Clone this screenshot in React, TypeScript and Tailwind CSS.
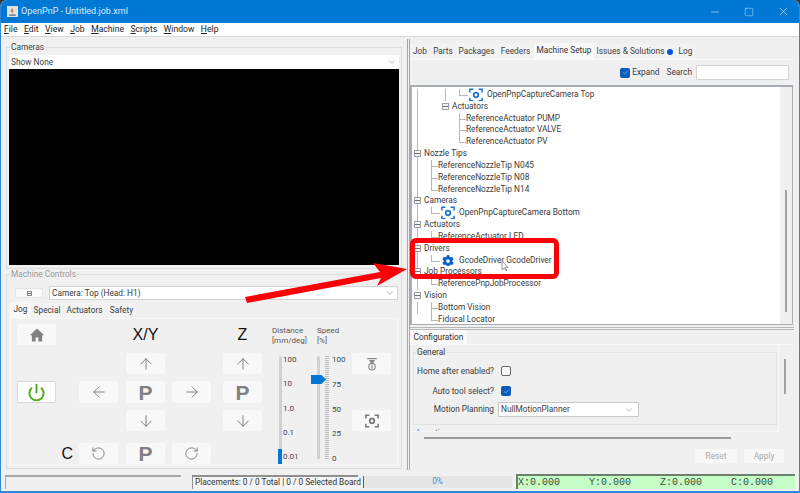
import React from "react";
import { ArrowUp, ArrowDown, ArrowLeft, ArrowRight, RotateCcw, RotateCw, Power, ChevronDown, Minus, Square, X, Check } from "lucide-react";
import { FaCog } from "react-icons/fa";

const FONT = "font-['Roboto','Noto_Sans',sans-serif]";

function Cam({ className = "", size = 14 }: { className?: string; size?: number }) {
  return (
    <svg viewBox="0 0 16 16" width={size} height={size} className={className} fill="none" stroke="currentColor" strokeWidth="1.7">
      <path d="M1 5V1.5H5M11 1.5H15V5M15 11V14.5H11M5 14.5H1V11" />
      <circle cx="8" cy="8" r="2.6" strokeWidth="2" />
    </svg>
  );
}

function Nozzle() {
  return (
    <svg viewBox="0 0 16 16" width={14} height={14} className="text-[#8a8a8a]">
      <path d="M2.5 1h11v1.6h-11zM4.5 3.4h7L9.4 7H6.6z" fill="currentColor" />
      <circle cx="8" cy="11" r="3.7" fill="none" stroke="currentColor" strokeWidth="1.3" />
      <path d="M8 8.5v5" stroke="currentColor" strokeWidth="1.3" />
    </svg>
  );
}

function HomeIcon() {
  return (
    <svg viewBox="0 0 16 16" width={16} height={16} className="text-[#808080]" fill="currentColor">
      <path d="M8 1.5 0.8 8.2h2.1V14.5h3.7v-4h2.8v4h3.7V8.2h2.1z" />
    </svg>
  );
}

function Btn({ children, className = "" }: { children?: React.ReactNode; className?: string }) {
  return <div className={`flex h-full w-full items-center justify-center rounded-[2px] bg-[#f8f8f8] ${className}`}>{children}</div>;
}

function PLabel() {
  return <span className="font-['Liberation_Sans',sans-serif] text-[21px] leading-none font-bold text-[#808080]">P</span>;
}

type Row = {
  text: string;
  x: number;
  guides: number[];
  box?: number;
  elbow?: number;
  icon?: "cam" | "gear";
  last?: boolean;
};

const TREE_LEFT = 412;
const rows: Row[] = [
  { text: "OpenPnpCaptureCamera Top", x: 487, guides: [417, 445], elbow: 459, icon: "cam", last: true },
  { text: "Actuators", x: 452, guides: [417], box: 445 },
  { text: "ReferenceActuator PUMP", x: 466, guides: [417], elbow: 459 },
  { text: "ReferenceActuator VALVE", x: 466, guides: [417], elbow: 459 },
  { text: "ReferenceActuator PV", x: 466, guides: [417], elbow: 459, last: true },
  { text: "Nozzle Tips", x: 424, guides: [], box: 417 },
  { text: "ReferenceNozzleTip N045", x: 438, guides: [417], elbow: 431 },
  { text: "ReferenceNozzleTip N08", x: 438, guides: [417], elbow: 431 },
  { text: "ReferenceNozzleTip N14", x: 438, guides: [417], elbow: 431, last: true },
  { text: "Cameras", x: 424, guides: [], box: 417 },
  { text: "OpenPnpCaptureCamera Bottom", x: 459, guides: [417], elbow: 431, icon: "cam", last: true },
  { text: "Actuators", x: 424, guides: [], box: 417 },
  { text: "ReferenceActuator LED", x: 438, guides: [417], elbow: 431, last: true },
  { text: "Drivers", x: 424, guides: [], box: 417 },
  { text: "GcodeDriver GcodeDriver", x: 459, guides: [417], elbow: 431, icon: "gear", last: true },
  { text: "Job Processors", x: 424, guides: [], box: 417 },
  { text: "ReferencePnpJobProcessor", x: 438, guides: [417], elbow: 431, last: true },
  { text: "Vision", x: 424, guides: [], box: 417 },
  { text: "Bottom Vision", x: 438, guides: [417], elbow: 431 },
  { text: "Fiducal Locator", x: 438, elbow: 431, guides: [], last: true },
];

function TreeRow({ r, i }: { r: Row; i: number }) {
  const isTopRoot = r.box === 417;
  return (
    <div className="relative h-[11.84px] leading-[11.84px] whitespace-nowrap text-[#3a3a3a]">
      {r.guides.map((g) => (
        <span key={g} className="absolute top-0 bottom-0 w-px bg-[#b8b8b8]" style={{ left: g - TREE_LEFT }} />
      ))}
      {isTopRoot && i !== 17 && <span className="absolute top-0 bottom-0 w-px bg-[#b8b8b8]" style={{ left: 417 - TREE_LEFT }} />}
      {r.elbow !== undefined && (
        <>
          <span className="absolute top-0 w-px bg-[#b8b8b8]" style={{ left: r.elbow - TREE_LEFT, height: r.last ? 6 : 12 }} />
          <span className="absolute top-[6px] h-px bg-[#b8b8b8]" style={{ left: r.elbow - TREE_LEFT, width: r.icon ? 9 : r.x - r.elbow }} />
        </>
      )}
      {r.box !== undefined && (
        <span
          className="absolute top-[2px] flex h-[7px] w-[7px] items-center justify-center border border-[#9aa0a6] bg-[#f4f4f4]"
          style={{ left: r.box - TREE_LEFT - 3 }}
        >
          <span className="h-px w-[5px] bg-[#707070]" />
        </span>
      )}
      {r.icon === "cam" && (
        <span className="absolute top-[-1px] text-[#1a73d9]" style={{ left: r.x - TREE_LEFT - 18 }}>
          <Cam size={14} />
        </span>
      )}
      {r.icon === "gear" && (
        <span className="absolute top-0 text-[#0a63c9]" style={{ left: r.x - TREE_LEFT - 17 }}>
          <FaCog size={12} />
        </span>
      )}
      <span className="absolute top-0 bg-white" style={{ left: r.x - TREE_LEFT }}>
        {r.text}
      </span>
    </div>
  );
}

function Tab({ children, active, className = "" }: { children: React.ReactNode; active?: boolean; className?: string }) {
  return (
    <div
      className={`flex shrink-0 items-center justify-center whitespace-nowrap ${active ? "mt-[-1px] h-[16px] bg-[#f9f9f9] pb-[2px] text-[#333]" : "h-[15px] bg-[#f3f3f3] text-[#3c3c3c]"} ${className}`}
    >
      {children}
    </div>
  );
}

function Tick({ n }: { n: string }) {
  return <span className="block leading-none">{n}</span>;
}

export default function App() {
  return (
    <div className="bg-[#3a3a3a]">
      <div className={`relative flex h-[493px] w-[800px] flex-col overflow-hidden rounded-t-[7px] border-x border-b-2 border-[#2f8ad6] bg-[#f0f0f0] text-[8.3px] text-[#3c3c3c] ${FONT}`}>
        {/* Title bar */}
        <div className="mx-[-1px] flex h-[23px] shrink-0 items-center bg-[#0078d4] pl-[7px] text-white">
          <svg viewBox="0 0 12 12" width={11} height={11} className="mr-[3px]">
            <rect width="12" height="12" fill="#dfe3e8" />
            <path d="M3 9h6l1 2H2z" fill="#7a8aa0" />
            <path d="M5.5 2 7 5l-1 3-2-2z" fill="#d9782d" />
          </svg>
          <span className="text-[9px] leading-none text-[#dbeeff]">OpenPnP - Untitled.job.xml</span>
          <div className="ml-auto flex items-center gap-[23px] pr-[10px]">
            <Minus size={12} strokeWidth={1} />
            <Square size={10} strokeWidth={1} />
            <X size={13} strokeWidth={1} />
          </div>
        </div>

        {/* Menu */}
        <div className="flex h-[14px] shrink-0 items-center gap-[6.5px] border-b border-[#d8d8d8] bg-white pl-[3px] text-[8.6px] leading-none text-[#222]">
          <span><u>F</u>ile</span>
          <span><u>E</u>dit</span>
          <span><u>V</u>iew</span>
          <span><u>J</u>ob</span>
          <span><u>M</u>achine</span>
          <span><u>S</u>cripts</span>
          <span><u>W</u>indow</span>
          <span><u>H</u>elp</span>
        </div>

        {/* Main */}
        <div className="flex min-h-0 flex-1">
          {/* Left column */}
          <div className="flex w-[405px] shrink-0 flex-col pt-[5px] pl-[5px]">
            <fieldset className="h-[227px] w-[396px] shrink-0 border border-[#dcdcdc] px-[2px]">
              <legend className="ml-[1px] h-[11px] px-[1px] leading-[11px] text-[#444]">Cameras</legend>
              <div className="mt-[2px] flex h-[14px] items-center justify-between bg-white px-[2px] text-[#3c3c3c]">
                <span>Show None</span>
                <ChevronDown size={10} strokeWidth={1} className="text-[#555]" />
              </div>
              <div className="h-[196px] bg-black" />
            </fieldset>
            <fieldset className="mt-0 h-[200px] w-[396px] shrink-0 border border-[#dcdcdc] px-[2px]">
              <legend className="ml-[1px] h-[11px] px-[1px] leading-[11px] text-[#999]">Machine Controls</legend>
              <div className="mt-[6px] flex h-[14px] items-center gap-[6px] pr-[1px] pl-[6px]">
                <div className="flex h-[10px] w-[28px] items-center justify-center rounded-[2px] border border-[#e3e3e3] bg-[#fafafa]">
                  <span className="flex h-[5px] w-[5px] items-center justify-center border border-[#888]">
                    <span className="h-px w-[3px] bg-[#666]" />
                  </span>
                </div>
                <div className="flex h-[14px] flex-1 items-center justify-between border border-[#d4d4d4] bg-white px-[2px] text-[#3c3c3c]">
                  <span>Camera: Top (Head: H1)</span>
                  <ChevronDown size={10} strokeWidth={1} className="text-[#555]" />
                </div>
              </div>
              <div className="mt-[3px] flex h-[15px] items-end gap-px pl-[1px] leading-none">
                <Tab active className="w-[21px]">Jog</Tab>
                <Tab className="w-[30px]">Special</Tab>
                <Tab className="ml-px w-[41px]">Actuators</Tab>
                <Tab className="ml-px w-[29px]">Safety</Tab>
              </div>
              <div className="mr-[1px] ml-[1px] grid h-[147px] grid-cols-[39px_23px_39px_8px_39px_7px_39px_12px_39px_90px_39px] grid-rows-[21px_8px_21px_7px_22px_7px_21px_12px_21px] border border-[#f8f8f8] bg-[#f0f0f0] pt-[5px] pl-[6px]">
                <div className="col-start-1 row-start-1"><Btn><HomeIcon /></Btn></div>
                <div className="col-start-5 row-start-1 flex items-center justify-center font-['Liberation_Sans',sans-serif] text-[16px] leading-none text-[#111]">X/Y</div>
                <div className="col-start-9 row-start-1 flex items-center justify-center font-['Liberation_Sans',sans-serif] text-[16px] leading-none text-[#111]">Z</div>

                <div className="col-start-5 row-start-3"><Btn><ArrowUp size={18} strokeWidth={1.2} className="text-[#777]" /></Btn></div>
                <div className="col-start-9 row-start-3"><Btn><ArrowUp size={18} strokeWidth={1.2} className="text-[#777]" /></Btn></div>

                <div className="col-start-1 row-start-5"><Btn className="border border-[#d9d9d9] !bg-white"><Power size={19} strokeWidth={2.4} className="text-[#4caf0f]" /></Btn></div>
                <div className="col-start-3 row-start-5"><Btn><ArrowLeft size={18} strokeWidth={1.2} className="text-[#777]" /></Btn></div>
                <div className="col-start-5 row-start-5"><Btn><PLabel /></Btn></div>
                <div className="col-start-7 row-start-5"><Btn><ArrowRight size={18} strokeWidth={1.2} className="text-[#777]" /></Btn></div>
                <div className="col-start-9 row-start-5"><Btn><PLabel /></Btn></div>

                <div className="col-start-5 row-start-7"><Btn><ArrowDown size={18} strokeWidth={1.2} className="text-[#777]" /></Btn></div>
                <div className="col-start-9 row-start-7"><Btn><ArrowDown size={18} strokeWidth={1.2} className="text-[#777]" /></Btn></div>

                <div className="col-start-2 row-start-9 flex items-center justify-end pr-[6px] font-['Liberation_Sans',sans-serif] text-[16px] leading-none text-[#111]">C</div>
                <div className="col-start-3 row-start-9"><Btn><RotateCcw size={15} strokeWidth={1.4} className="text-[#777]" /></Btn></div>
                <div className="col-start-5 row-start-9"><Btn><PLabel /></Btn></div>
                <div className="col-start-7 row-start-9"><Btn><RotateCw size={15} strokeWidth={1.4} className="text-[#777]" /></Btn></div>

                {/* Sliders */}
                <div className="col-start-10 row-start-1 row-end-10 ml-[10px] flex flex-col text-[8px] leading-[10px] text-[#555]">
                  <div className="flex h-[32px] shrink-0 pt-[2px]">
                    <div className="w-[45px]">Distance<br />[mm/deg]</div>
                    <div>Speed<br />[%]</div>
                  </div>
                  <div className="flex">
                    <div className="relative ml-[7px] h-[108px] w-[3px] rounded-sm bg-[#d0d0d0]">
                      <span className="absolute bottom-0 left-[-1px] h-[15px] w-[4px] bg-[#0078d4]" />
                    </div>
                    <div className="ml-[1px] flex h-[105px] w-[34px] flex-col justify-between text-[#444]">
                      <Tick n="100" />
                      <Tick n="10" />
                      <Tick n="1.0" />
                      <Tick n="0.1" />
                      <Tick n="0.01" />
                    </div>
                    <div className="relative h-[103px] w-[3px] rounded-sm bg-[#d0d0d0]">
                      <span className="absolute top-[19px] left-[-6px] h-[9px] w-[15px] bg-[#0078d4] [clip-path:polygon(0_0,70%_0,100%_50%,70%_100%,0_100%)]" />
                    </div>
                    <div className="ml-[5px] h-[103px] w-[4px] bg-[repeating-linear-gradient(to_bottom,#bbb_0,#bbb_1px,transparent_1px,transparent_2px)]" />
                    <div className="ml-[3px] flex h-[107px] flex-col justify-between text-[#444]">
                      <Tick n="100" />
                      <Tick n="75" />
                      <Tick n="50" />
                      <Tick n="25" />
                      <Tick n="0" />
                    </div>
                  </div>
                </div>
                <div className="col-start-11 row-start-3"><Btn><Nozzle /></Btn></div>
                <div className="col-start-11 row-start-7"><Btn><Cam size={14} className="text-[#777]" /></Btn></div>
              </div>
            </fieldset>
          </div>

          {/* Splitter */}
          <div className="mt-[2px] mb-[3px] ml-[1px] flex w-[3px] shrink-0 border-x border-[#a6a6a6]" />

          {/* Right column */}
          <div className="flex min-w-0 flex-1 flex-col pt-[6px] pr-[5px]">
            <div className="flex h-[16px] shrink-0 items-end leading-none">
              <Tab className="w-[20px]">Job</Tab>
              <Tab className="ml-px w-[24px]">Parts</Tab>
              <Tab className="ml-px w-[41px]">Packages</Tab>
              <Tab className="ml-px w-[35px]">Feeders</Tab>
              <Tab active className="ml-px w-[60px]">Machine Setup</Tab>
              <Tab className="ml-px w-[80px] gap-[3px]">
                Issues &amp; Solutions
                <span className="h-[6px] w-[6px] rounded-full bg-[#0a50d6]" />
              </Tab>
              <Tab className="ml-px w-[19px]">Log</Tab>
            </div>
            <div className="flex h-[26px] shrink-0 items-center justify-end gap-[3px] border-t border-[#f8f8f8] pr-[5px]">
              <span className="mr-[-1px] flex h-[10px] w-[10px] items-center justify-center rounded-[2px] bg-[#0a5cb8]">
                <Check size={7} strokeWidth={2} className="text-[#a8cdf2]" />
              </span>
              <span>Expand</span>
              <span className="ml-[4px]">Search</span>
              <span className="ml-[1px] h-[15px] w-[93px] border border-[#d4d4d4] bg-white" />
            </div>
            <div className="relative h-[240px] w-[383px] shrink-0 overflow-hidden border border-t-2 border-l-2 border-[#a8adb3] bg-white pt-[1px]">
              <div className="pt-px">
                {rows.map((r, i) => (
                  <TreeRow key={i} r={r} i={i} />
                ))}
              </div>
              <div className="absolute top-0 right-0 bottom-0 w-[12px] bg-[#f0f0f0]">
                <div className="absolute top-[103px] left-[5px] h-[122px] w-[2px] bg-[#a0a0a0]" />
              </div>
            </div>
            <div className="mt-[2px] h-[3px] shrink-0 border-y border-[#b8b8b8]" />
            <div className="flex h-[14px] shrink-0 items-end">
              <div className="flex h-[14px] w-[57px] items-center justify-center bg-[#f9f9f9] text-[#333]">Configuration</div>
            </div>
            <div className="flex h-[88px] shrink-0 overflow-hidden border-t border-[#f8f8f8] bg-[#f0f0f0]">
              <div className="w-[369px] shrink-0 overflow-hidden border-r border-b border-[#f8f8f8] pt-[2px] pl-[3px]">
                <fieldset className="h-[78px] w-[364px] border border-[#e2e2e2]">
                  <legend className="ml-[2px] h-[11px] px-[1px] leading-[11px] text-[#333]">General</legend>
                  <div className="grid grid-cols-[80px_auto] items-center gap-x-[7px] pt-[7px]">
                    <span className="h-[12px] text-right leading-[12px] whitespace-nowrap">Home after enabled?</span>
                    <span className="h-[10px] w-[10px] rounded-[2px] border border-[#666] bg-[#f8f8f8]" />
                    <span className="mt-[8px] h-[12px] text-right leading-[12px] whitespace-nowrap">Auto tool select?</span>
                    <span className="mt-[8px] flex h-[10px] w-[10px] items-center justify-center rounded-[2px] bg-[#0a5cb8]">
                      <Check size={7} strokeWidth={2} className="text-[#a8cdf2]" />
                    </span>
                    <span className="mt-[5px] h-[15px] text-right leading-[15px] whitespace-nowrap">Motion Planning</span>
                    <div className="mt-[5px] ml-[-3px] flex h-[15px] w-[141px] items-center justify-between border border-[#c8c8c8] bg-white px-[2px]">
                      <span>NullMotionPlanner</span>
                      <ChevronDown size={10} strokeWidth={1} className="mr-[2px] text-[#555]" />
                    </div>
                  </div>
                </fieldset>
                <div className="mt-[3px] ml-[4px] leading-[11px] text-[#444]">Locations</div>
              </div>
              <div className="pt-[14px] pl-[5px]">
                <div className="h-[35px] w-[2px] bg-[#a0a0a0]" />
              </div>
            </div>
            <div className="mt-[5px] ml-[14px] h-[2px] w-[307px] shrink-0 bg-[#9c9c9c]" />
            <div className="mt-[10px] flex shrink-0 justify-end gap-[7px] pr-[10px] text-[#a8a8a8]">
              <div className="flex h-[14px] w-[42px] items-center justify-center rounded-[2px] bg-[#f8f8f8]">Reset</div>
              <div className="flex h-[14px] w-[40px] items-center justify-center rounded-[2px] bg-[#f8f8f8]">Apply</div>
            </div>
          </div>
        </div>

        {/* Status bar */}
        <div className="mb-[1px] flex h-[17px] shrink-0 items-stretch pr-[4px] pl-[4px]">
          <div className="h-[14px] w-[176px] self-center border-t-2 border-l border-[#a8a8a8] bg-[#f0f0f0]" />
          <div className="ml-[11px] flex h-[14px] w-[166px] items-center self-center border-t-2 border-l border-[#8f8f8f] bg-[#f4f4f4] pl-[2px] whitespace-nowrap text-[#333]">
            Placements: 0 / 0 Total | 0 / 0 Selected Board
          </div>
          <div className="relative ml-[5px] flex h-[12px] w-[149px] items-center justify-center self-center bg-[#e6e6e6] text-[#3d8fd8]">
            <span className="absolute top-0 left-0 h-full w-[1px] bg-[#0078d4]" />
            0%
          </div>
          <div className="ml-[4px] grid h-[15px] flex-1 grid-cols-[71px_71px_71px_auto] items-center self-center border-t-2 border-l-2 border-[#6f7f6f] bg-[#c6ffc6] font-['Liberation_Mono',monospace] text-[10px] leading-none text-[#3c4a3c]">
            <span>X:0.000</span>
            <span>Y:0.000</span>
            <span>Z:0.000</span>
            <span>C:0.000</span>
          </div>
        </div>

        {/* Annotations over the picture */}
        <div className="pointer-events-none absolute top-[238px] left-[409px] h-[41px] w-[149px] rounded-[6px] border-[5px] border-[#fb0007]" />
        <svg className="pointer-events-none absolute top-0 left-[-1px]" width="800" height="493" viewBox="0 0 800 493">
          <polygon points="245,297 380,272 373,263 407,269 377,286 381,278 247,303" fill="#fb0007" />
          <path d="M502 261l0 9 2-2 2 3 1-.6-2-3h3z" fill="#fff" stroke="#555" strokeWidth="0.6" />
        </svg>
      </div>
    </div>
  );
}
